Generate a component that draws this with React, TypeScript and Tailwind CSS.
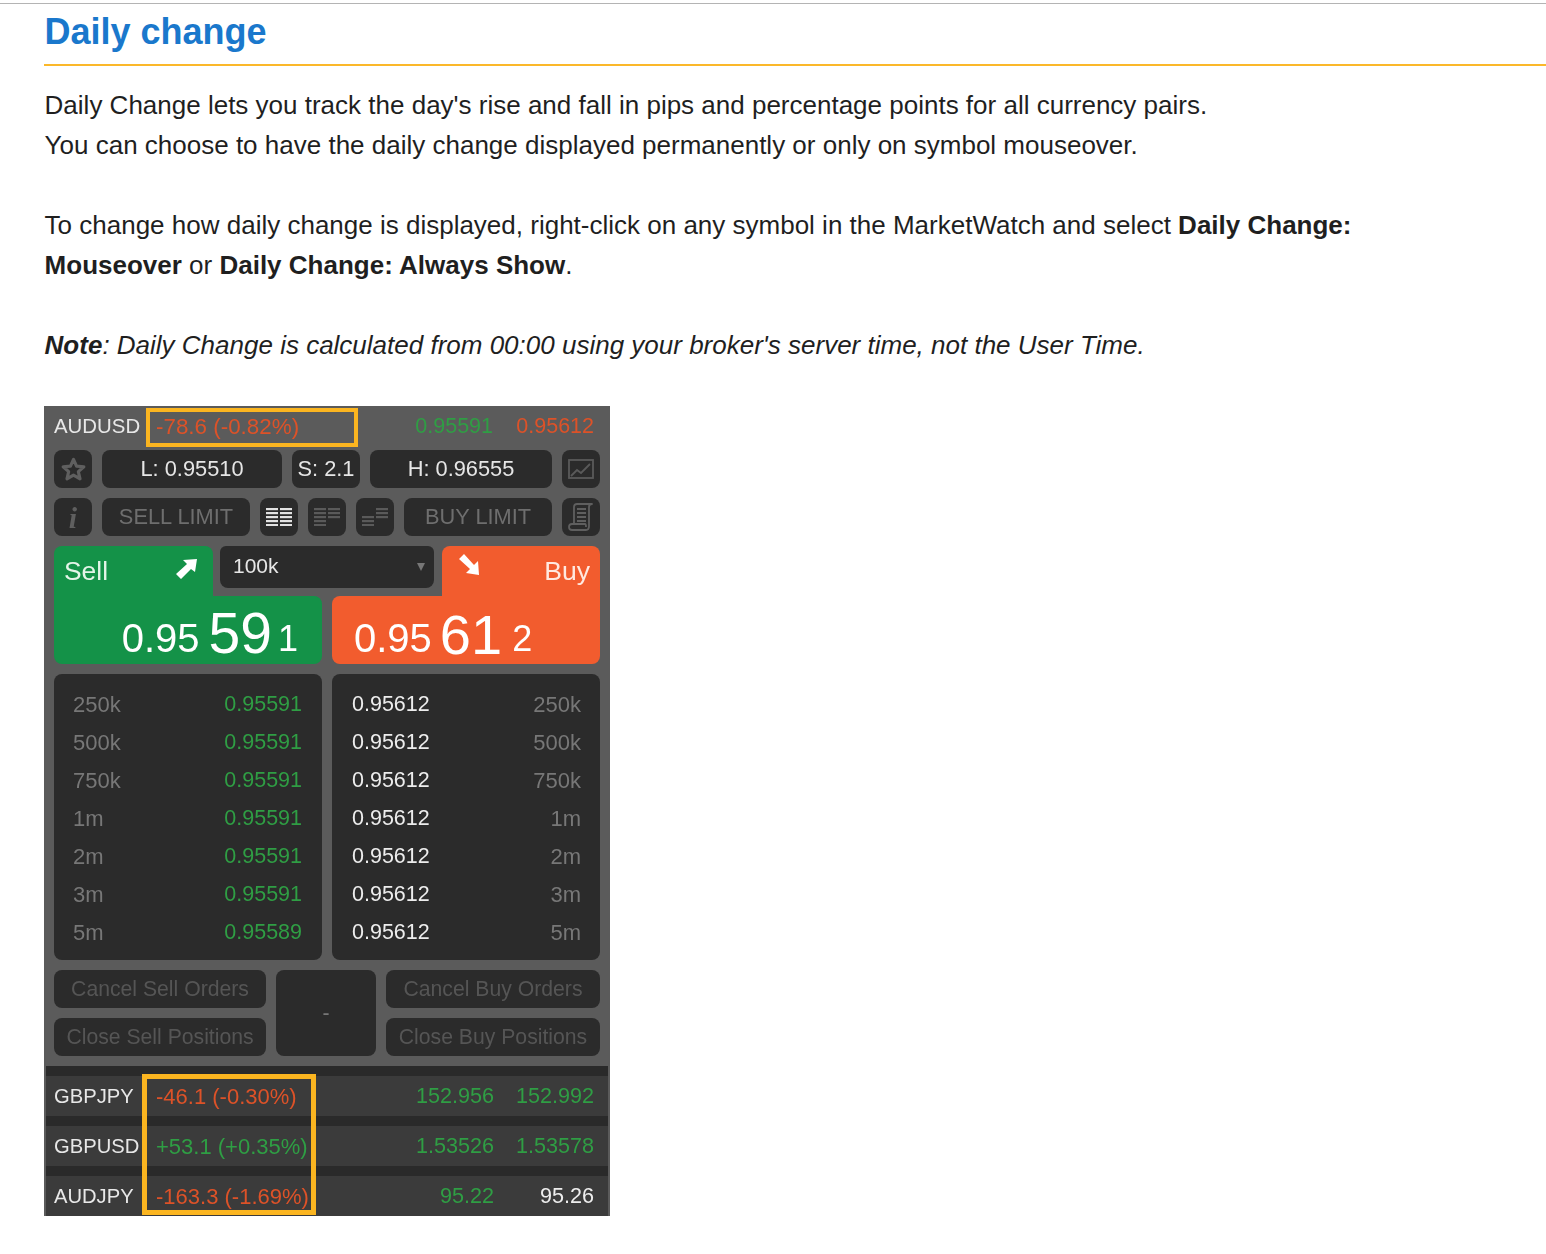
const GREEN = "text-[#2f9e44]";
const RED = "text-[#dd5228]";

function Btn({ w, children, className = "" }: { w: string; children?: React.ReactNode; className?: string }) {
  return (
    <div className={`${w} h-[38px] shrink-0 rounded-lg bg-[#2b2b2b] flex items-center justify-center ${className}`}>
      {children}
    </div>
  );
}

function Bars({ left, right, leftY, rightY, color }: { left: number; right: number; leftY: number; rightY: number; color: string }) {
  const l = Array.from({ length: left }, (_, i) => i);
  const r = Array.from({ length: right }, (_, i) => i);
  return (
    <svg width="26" height="18" viewBox="0 0 26 18">
      {l.map((i) => (
        <rect key={i} x="0" y={leftY + i * 4} width="12" height="2.2" fill={color} />
      ))}
      {r.map((i) => (
        <rect key={i} x="14" y={rightY + i * 4} width="12" height="2.2" fill={color} />
      ))}
    </svg>
  );
}

function DepthPanel({ side }: { side: "sell" | "buy" }) {
  const sizes = ["250k", "500k", "750k", "1m", "2m", "3m", "5m"];
  const sell = ["0.95591", "0.95591", "0.95591", "0.95591", "0.95591", "0.95591", "0.95589"];
  return (
    <div className={`w-[268px] h-[286px] rounded-lg bg-[#2b2b2b] py-[11px] ${side === "sell" ? "pl-[19px] pr-[20px]" : "pl-[20px] pr-[19px]"}`}>
      {sizes.map((s, i) => (
        <div key={s} className="h-[38px] flex items-center justify-between text-[21.5px]">
          {side === "sell" ? (
            <>
              <span className="text-[#777777] text-[22px]">{s}</span>
              <span className={GREEN}>{sell[i]}</span>
            </>
          ) : (
            <>
              <span className="text-[#ededed]">0.95612</span>
              <span className="text-[#777777] text-[22px]">{s}</span>
            </>
          )}
        </div>
      ))}
    </div>
  );
}

function Row({ sym, chg, chgColor, bid, ask, askColor }: { sym: string; chg: string; chgColor: string; bid: string; ask: string; askColor: string }) {
  return (
    <div className="h-10 bg-[#3b3b3b] pl-2 pr-[14px] flex items-center text-[21.6px]">
      <span className="w-[102px] shrink-0 text-[20.2px] text-[#e8e8e8] whitespace-nowrap">{sym}</span>
      <span className={`flex-1 whitespace-nowrap text-[22px] ${chgColor}`}>{chg}</span>
      <span className={`${GREEN} w-[100px] text-right`}>{bid}</span>
      <span className={`${askColor} w-[100px] text-right`}>{ask}</span>
    </div>
  );
}

function Widget() {
  return (
    <div className="relative w-[566px] h-[810px] bg-[#5b5b5b] blur-[0.5px] [font-family:'Liberation_Sans',Arial,sans-serif]">
      <div className="h-[44px] pl-[10px] pr-4 pb-[3px] flex items-center text-[21.5px]">
        <span className="w-[102px] shrink-0 text-[20.4px] text-[#e8e8e8]">AUDUSD</span>
        <span className={`flex-1 text-[22.4px] ${RED}`}>-78.6 (-0.82%)</span>
        <span className={`${GREEN} w-[100px] text-right`}>0.95591</span>
        <span className={`${RED} w-[101px] text-right`}>0.95612</span>
      </div>

      <div className="px-[10px] flex flex-col gap-[10px]">
        <div className="flex gap-[10px] text-[21.8px] text-[#e6e6e6]">
          <Btn w="w-[38px]">
            <svg width="27" height="27" viewBox="0 0 24 24" fill="none" stroke="#5f5f5f" strokeWidth="2.8" strokeLinejoin="round">
              <path d="M12 3l2.7 6 6.5.6-4.9 4.3 1.5 6.4L12 17l-5.8 3.3 1.5-6.4-4.9-4.3 6.5-.6z" />
            </svg>
          </Btn>
          <Btn w="w-[180px]">L: 0.95510</Btn>
          <Btn w="w-[68px]">S: 2.1</Btn>
          <Btn w="w-[182px]">H: 0.96555</Btn>
          <Btn w="w-[38px]">
            <svg width="28" height="24" viewBox="0 0 28 24" fill="none" stroke="#5a5a5a" strokeWidth="1.8">
              <rect x="2" y="3" width="24" height="18" />
              <path d="M4 19l6-6 4 3 9-9" />
            </svg>
          </Btn>
        </div>

        <div className="flex gap-[10px] text-[21.8px] text-[#6e6e6e]">
          <Btn w="w-[38px]">
            <span className="italic font-bold text-[30px] text-[#5f5f5f] [font-family:'Liberation_Serif',serif]">i</span>
          </Btn>
          <Btn w="w-[148px]">SELL LIMIT</Btn>
          <Btn w="w-[38px]">
            <Bars left={5} right={5} leftY={0} rightY={0} color="#e2e2e2" />
          </Btn>
          <Btn w="w-[38px]">
            <Bars left={5} right={3} leftY={0} rightY={0} color="#5a5a5a" />
          </Btn>
          <Btn w="w-[38px]">
            <Bars left={3} right={3} leftY={8} rightY={0} color="#5a5a5a" />
          </Btn>
          <Btn w="w-[148px]">BUY LIMIT</Btn>
          <Btn w="w-[38px]">
            <svg width="28" height="30" viewBox="0 0 28 30" fill="none" stroke="#5f5f5f" strokeWidth="1.8" strokeLinejoin="round">
              <path d="M7 21V5c0-2 1-3 3-3h15c-2 0-3 1-3 3v19c0 2-1 4-3 4H5c-2 0-3-1-3-3s1-3 3-3h13c1 0 1 1 1 3" />
              <path d="M10 7h9M10 11h9M10 15h9M10 19h9" />
            </svg>
          </Btn>
        </div>

        <div className="flex flex-col">
          <div className="flex h-[50px]">
            <div className="w-[159px] bg-[#149248] rounded-t-lg pl-[10px] pr-[15px] pt-[8px] flex items-start justify-between">
              <span className="text-[26.4px] leading-[34px] text-[#e4f5e8]">Sell</span>
              <svg width="24" height="24" viewBox="0 0 24 24" className="mt-[3px]">
                <path d="M23 2L9 3l4 4L2 17l5 5L17 12l4 3z" fill="#ffffff" />
              </svg>
            </div>
            <div className="ml-[7px] w-[214px] h-[42px] rounded-b-lg rounded-t-md bg-[#2b2b2b] pl-[13px] pr-2 flex items-center justify-between">
              <span className="text-[21px] text-[#e6e6e6] -mt-[2px]">100k</span>
              <svg width="10" height="10" viewBox="0 0 10 10">
                <path d="M1 1h8L5 9z" fill="#777777" />
              </svg>
            </div>
            <div className="ml-[8px] w-[158px] bg-[#f25c2e] rounded-t-lg pl-[15px] pr-[10px] pt-[8px] flex items-start justify-between">
              <svg width="24" height="24" viewBox="0 0 24 24" className="-mt-[1px]">
                <path d="M22 22L21 8l-4 4L7 1 2 6l11 10-4 4z" fill="#ffffff" />
              </svg>
              <span className="text-[26.6px] leading-[34px] text-[#ffe9e0]">Buy</span>
            </div>
          </div>
          <div className="flex gap-[10px]">
            <div className="w-[268px] h-[68px] bg-[#149248] rounded-b-lg rounded-tr-lg pr-[24px] pb-[1px] flex items-end justify-end text-white">
              <span className="text-[40px] leading-[50px]">0.95</span>
              <span className="text-[57px] leading-[62px] ml-[9px] translate-y-[1px]">59</span>
              <span className="text-[36px] leading-[48px] ml-[6px]">1</span>
            </div>
            <div className="w-[268px] h-[68px] bg-[#f25c2e] rounded-b-lg rounded-tl-lg pl-[22px] pb-[1px] flex items-end text-white">
              <span className="text-[40px] leading-[50px]">0.95</span>
              <span className="text-[56px] leading-[62px] ml-[8px] translate-y-[3px]">61</span>
              <span className="text-[36px] leading-[48px] ml-[10px]">2</span>
            </div>
          </div>
        </div>

        <div className="flex gap-[10px]">
          <DepthPanel side="sell" />
          <DepthPanel side="buy" />
        </div>

        <div className="flex gap-[10px] text-[21.2px] text-[#555555]">
          <div className="flex flex-col gap-[10px]">
            <Btn w="w-[212px]">Cancel Sell Orders</Btn>
            <Btn w="w-[212px]">Close Sell Positions</Btn>
          </div>
          <div className="w-[100px] h-[86px] rounded-lg bg-[#2b2b2b] flex items-center justify-center text-[#777777]">-</div>
          <div className="flex flex-col gap-[10px]">
            <Btn w="w-[214px]">Cancel Buy Orders</Btn>
            <Btn w="w-[214px]">Close Buy Positions</Btn>
          </div>
        </div>
      </div>

      <div className="mt-[10px] mx-[2px] bg-[#2a2a2a] pt-[10px] flex flex-col gap-[10px]">
        <Row sym="GBPJPY" chg="-46.1 (-0.30%)" chgColor={RED} bid="152.956" ask="152.992" askColor={GREEN} />
        <Row sym="GBPUSD" chg="+53.1 (+0.35%)" chgColor={GREEN} bid="1.53526" ask="1.53578" askColor={GREEN} />
        <Row sym="AUDJPY" chg="-163.3 (-1.69%)" chgColor={RED} bid="95.22" ask="95.26" askColor="text-[#ededed]" />
      </div>

      <div className="absolute left-[102px] top-[2px] w-[212px] h-[39px] border-4 border-[#fbb520]" />
      <div className="absolute left-[98px] top-[668px] w-[174px] h-[141px] border-[5px] border-[#fbb520]" />
    </div>
  );
}

export default function App() {
  return (
    <div className="min-h-[1254px] bg-white pt-[3px] text-[#1f1f1f] [font-family:'Liberation_Sans',Arial,sans-serif]">
      <div className="border-t border-[#b4b4b4] pl-[44px]">
        <h1 className="box-content h-[52px] border-b-2 border-[#fbb82a] pl-[0.5px] pt-[8px] text-[36px] leading-[40px] font-bold text-[#1a78cc]">
          Daily change
        </h1>
        <div className="pl-[0.6px] pt-[19px] text-[26px] leading-[40px]">
          <p>
            Daily Change lets you track the day's rise and fall in pips and percentage points for all currency pairs.
            <br />
            You can choose to have the daily change displayed permanently or only on symbol mouseover.
          </p>
          <p className="mt-[40px]">
            To change how daily change is displayed, right-click on any symbol in the MarketWatch and select{" "}
            <b>Daily Change:</b>
            <br />
            <b>Mouseover</b> or <b>Daily Change: Always Show</b>.
          </p>
          <p className="mt-[40px] italic">
            <b>Note</b>: Daily Change is calculated from 00:00 using your broker's server time, not the User Time.
          </p>
        </div>
        <div className="mt-[41px]">
          <Widget />
        </div>
      </div>
    </div>
  );
}
